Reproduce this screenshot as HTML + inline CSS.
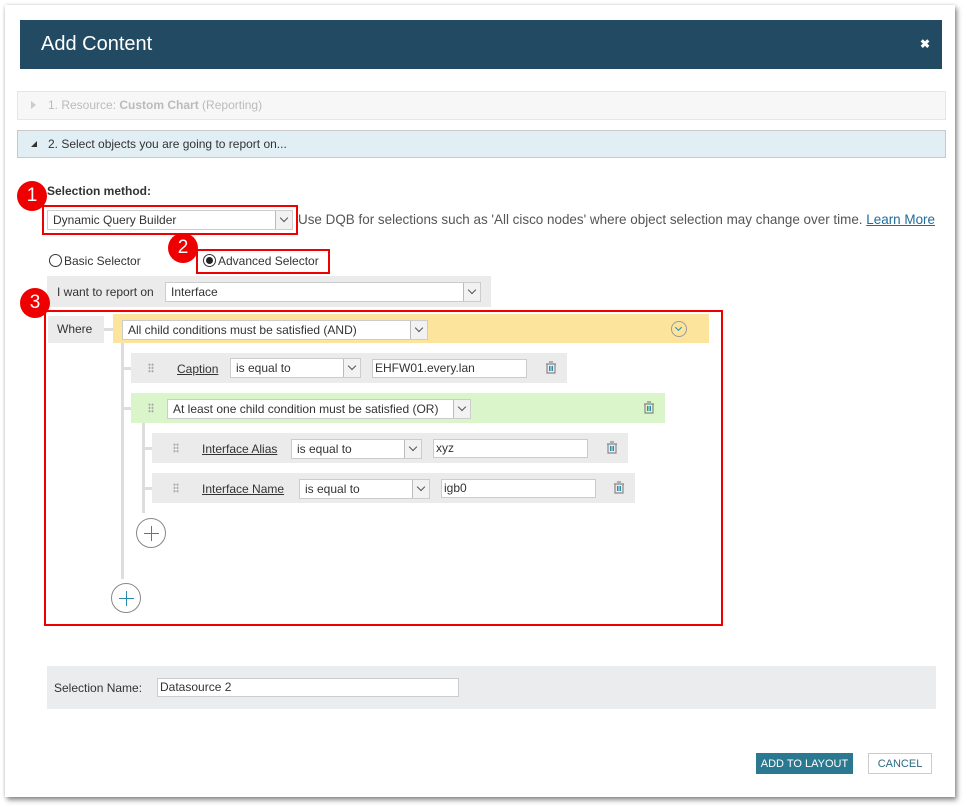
<!DOCTYPE html>
<html><head><meta charset="utf-8"><style>
*{box-sizing:border-box;margin:0;padding:0}
body{width:967px;height:807px;background:#fff;font-family:"Liberation Sans",sans-serif;font-size:12px;color:#333;position:relative;overflow:hidden}
.a{position:absolute}
.dlg{left:5px;top:5px;width:950px;height:792px;background:#fff;box-shadow:2px 3px 5px rgba(0,0,0,.45),0 0 3px rgba(0,0,0,.15)}
.sel{position:absolute;background:#fff;border:1px solid #ccc;height:20px;line-height:18px;padding-left:5px;white-space:nowrap;overflow:hidden}
.sel .dd{position:absolute;right:0;top:0;width:17px;height:18px;border-left:1px solid #bbb;background:#f2f2f2}
.sel .dd:after{content:"";position:absolute;left:5px;top:4px;width:5px;height:5px;border-right:1px solid #555;border-bottom:1px solid #555;transform:rotate(45deg)}
.inp{position:absolute;background:#fff;border:1px solid #ccc;height:19px;line-height:17px;padding-left:2px}
.badge{position:absolute;width:30px;height:30px;border-radius:50%;background:#e00;color:#fff;font-size:19px;text-align:center;line-height:30px}
.rb{position:absolute;border:2px solid #e00}
.row{position:absolute;background:#ebebeb}
.lnk{position:absolute;text-decoration:underline;color:#333}
.dots{position:absolute;width:6px;height:10px;background:radial-gradient(circle,#aaa 1px,transparent 1.2px) 0 0/3px 3.3px}
.vl{position:absolute;background:#ddd;width:3px}
.hl{position:absolute;background:#ddd;height:3px}
.plus{position:absolute;width:30px;height:30px;border:1px solid #888;border-radius:50%;background:#fff}
.plus:before{content:"";position:absolute;left:7px;top:14px;width:15px;height:1px;background:#2a8ab0}
.plus:after{content:"";position:absolute;left:14px;top:7px;width:1px;height:15px;background:#2a8ab0}
</style></head><body>
<div class="a dlg"></div>
<div class="a" style="left:20px;top:20px;width:922px;height:49px;background:#234a63"></div>
<div class="a" style="left:41px;top:33px;color:#fff;font-size:20px">Add Content</div>
<div class="a" style="left:920px;top:37px;color:#fff;font-size:12px;font-weight:bold">✖</div>

<div class="a" style="left:17px;top:91px;width:929px;height:29px;background:#f7f7f7;border:1px solid #e6e6e6"></div>
<div class="a" style="left:31px;top:101px;width:0;height:0;border-left:5px solid #ccc;border-top:4px solid transparent;border-bottom:4px solid transparent"></div>
<div class="a" style="left:48px;top:98px;color:#bbb">1. Resource: <b>Custom Chart</b> (Reporting)</div>
<div class="a" style="left:17px;top:130px;width:929px;height:28px;background:#e1eff5;border:1px solid #c8c8c8"></div>
<div class="a" style="left:31px;top:141px;width:0;height:0;border-right:6px solid #333;border-top:6px solid transparent"></div>
<div class="a" style="left:48px;top:137px">2. Select objects you are going to report on...</div>

<div class="a" style="left:47px;top:184px;font-weight:bold">Selection method:</div>
<div class="rb" style="left:42px;top:205px;width:256px;height:30px"></div>
<div class="sel" style="left:47px;top:210px;width:246px">Dynamic Query Builder<span class="dd"></span></div>
<div class="a" style="left:298px;top:212px;color:#555;font-size:13.45px;white-space:nowrap">Use DQB for selections such as 'All cisco nodes' where object selection may change over time. <span style="color:#1f6c9a;text-decoration:underline">Learn More</span></div>
<div class="badge" style="left:17px;top:181px">1</div>

<div class="a" style="left:49px;top:254px;width:13px;height:13px;border:1px solid #333;border-radius:50%"></div>
<div class="a" style="left:64px;top:254px">Basic Selector</div>
<div class="rb" style="left:196px;top:249px;width:134px;height:25px"></div>
<div class="a" style="left:203px;top:254px;width:13px;height:13px;border:1px solid #333;border-radius:50%"><div style="position:absolute;left:2px;top:2px;width:7px;height:7px;border-radius:50%;background:#222"></div></div>
<div class="a" style="left:218px;top:254px">Advanced Selector</div>
<div class="badge" style="left:168px;top:233px">2</div>

<div class="row" style="left:47px;top:276px;width:444px;height:31px"></div>
<div class="a" style="left:57px;top:285px">I want to report on</div>
<div class="sel" style="left:165px;top:282px;width:316px">Interface<span class="dd"></span></div>

<div class="rb" style="left:44px;top:310px;width:679px;height:316px"></div>
<div class="badge" style="left:20px;top:288px">3</div>
<div class="row" style="left:48px;top:316px;width:56px;height:27px"></div>
<div class="a" style="left:57px;top:322px">Where</div>
<div class="hl" style="left:104px;top:328px;width:10px"></div>
<div class="a" style="left:113px;top:314px;width:596px;height:29px;background:#fde49c"></div>
<div class="sel" style="left:122px;top:320px;width:306px">All child conditions must be satisfied (AND)<span class="dd"></span></div>
<div class="a" style="left:671px;top:321px;width:16px;height:16px;border:1px solid #999;border-radius:50%"><div style="position:absolute;left:4px;top:3px;width:5px;height:5px;border-right:1.5px solid #2a8ab0;border-bottom:1.5px solid #2a8ab0;transform:rotate(45deg)"></div></div>

<div class="vl" style="left:121px;top:343px;height:236px"></div>
<div class="hl" style="left:122px;top:367px;width:10px"></div>
<div class="hl" style="left:122px;top:407px;width:10px"></div>
<div class="row" style="left:131px;top:353px;width:436px;height:30px"></div>
<div class="dots" style="left:148px;top:363px"></div>
<div class="lnk" style="left:177px;top:362px">Caption</div>
<div class="sel" style="left:230px;top:358px;width:131px">is equal to<span class="dd"></span></div>
<div class="inp" style="left:372px;top:359px;width:155px">EHFW01.every.lan</div>
<svg class="a" style="left:545px;top:361px" width="12" height="13" viewBox="0 0 12 13"><path d="M4 1h4M1 3h10M2 3v9h8V3" fill="none" stroke="#888" stroke-width="1.2"/><path d="M4.5 5v5M6 5v5M7.5 5v5" stroke="#2a8ab0"/></svg>

<div class="a" style="left:131px;top:393px;width:534px;height:30px;background:#d9f5c9"></div>
<div class="dots" style="left:148px;top:403px"></div>
<div class="sel" style="left:167px;top:399px;width:304px">At least one child condition must be satisfied (OR)<span class="dd"></span></div>
<svg class="a" style="left:643px;top:401px" width="12" height="13" viewBox="0 0 12 13"><path d="M4 1h4M1 3h10M2 3v9h8V3" fill="none" stroke="#888" stroke-width="1.2"/><path d="M4.5 5v5M6 5v5M7.5 5v5" stroke="#2a8ab0"/></svg>

<div class="vl" style="left:142px;top:423px;height:90px"></div>
<div class="hl" style="left:143px;top:447px;width:10px"></div>
<div class="hl" style="left:143px;top:487px;width:10px"></div>
<div class="row" style="left:152px;top:433px;width:476px;height:30px"></div>
<div class="dots" style="left:173px;top:443px"></div>
<div class="lnk" style="left:202px;top:442px">Interface Alias</div>
<div class="sel" style="left:291px;top:439px;width:131px">is equal to<span class="dd"></span></div>
<div class="inp" style="left:433px;top:439px;width:155px">xyz</div>
<svg class="a" style="left:606px;top:441px" width="12" height="13" viewBox="0 0 12 13"><path d="M4 1h4M1 3h10M2 3v9h8V3" fill="none" stroke="#888" stroke-width="1.2"/><path d="M4.5 5v5M6 5v5M7.5 5v5" stroke="#2a8ab0"/></svg>

<div class="row" style="left:152px;top:473px;width:483px;height:30px"></div>
<div class="dots" style="left:173px;top:483px"></div>
<div class="lnk" style="left:202px;top:482px">Interface Name</div>
<div class="sel" style="left:299px;top:479px;width:131px">is equal to<span class="dd"></span></div>
<div class="inp" style="left:441px;top:479px;width:155px">igb0</div>
<svg class="a" style="left:613px;top:481px" width="12" height="13" viewBox="0 0 12 13"><path d="M4 1h4M1 3h10M2 3v9h8V3" fill="none" stroke="#888" stroke-width="1.2"/><path d="M4.5 5v5M6 5v5M7.5 5v5" stroke="#2a8ab0"/></svg>

<div class="plus" style="left:136px;top:518px"></div>
<div class="plus" style="left:111px;top:583px"></div>

<div class="a" style="left:47px;top:666px;width:889px;height:43px;background:#ebecee"></div>
<div class="a" style="left:54px;top:681px;color:#333">Selection Name:</div>
<div class="inp" style="left:157px;top:678px;width:302px;height:19px">Datasource 2</div>

<div class="a" style="left:756px;top:753px;width:97px;height:21px;background:#2b7891;color:#fff;text-align:center;line-height:23px;font-size:11px">ADD TO LAYOUT</div>
<div class="a" style="left:868px;top:753px;width:64px;height:21px;border:1px solid #ccc;color:#2b6a85;text-align:center;line-height:21px;font-size:11px">CANCEL</div>
</body></html>
